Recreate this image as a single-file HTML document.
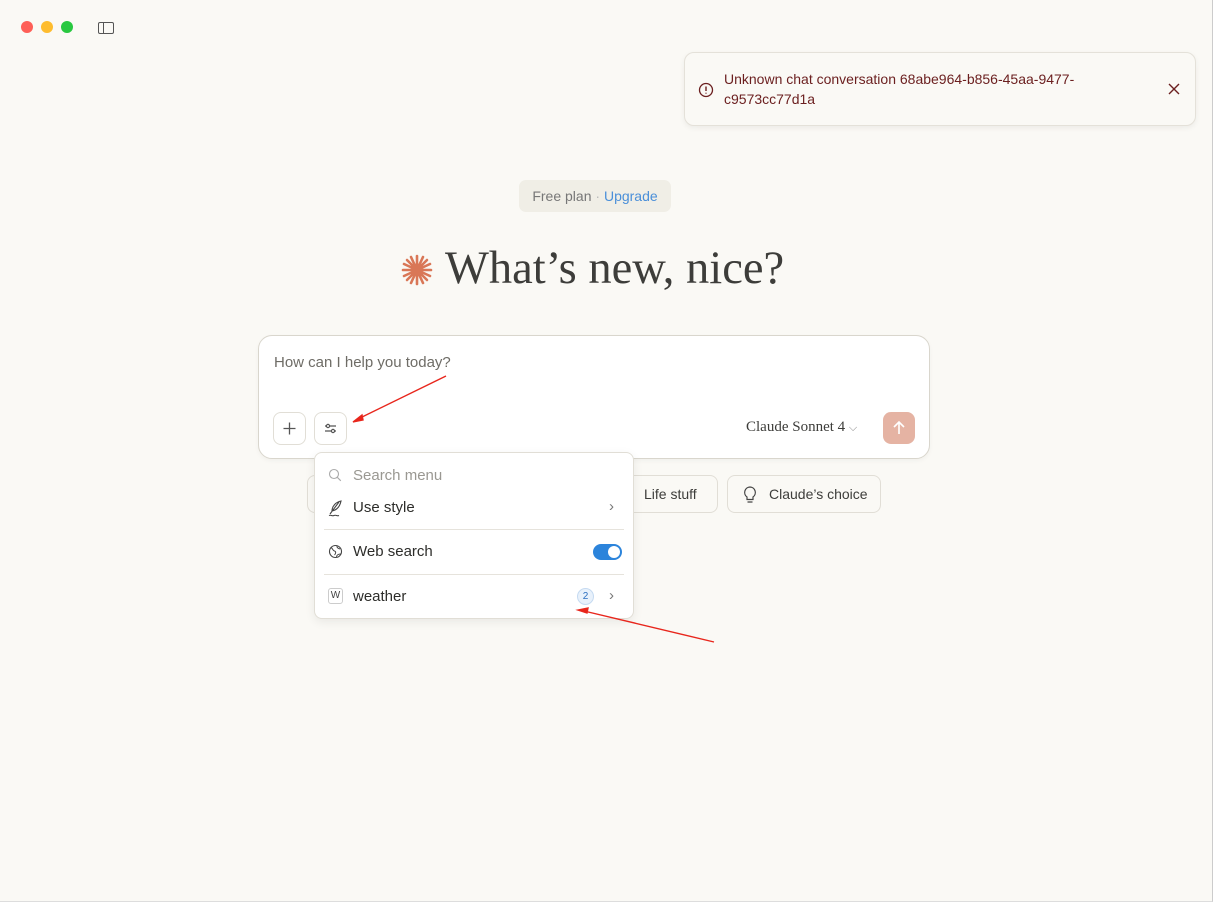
<!DOCTYPE html>
<html><head><meta charset="utf-8"><style>
*{box-sizing:border-box;margin:0;padding:0}
body{width:1213px;height:902px;background:#faf9f5;font-family:"Liberation Sans",sans-serif;position:relative;overflow:hidden;border-right:1px solid #ccc;border-bottom:1px solid #ddd}
.abs{position:absolute}
.dot{position:absolute;top:21px;width:12px;height:12px;border-radius:50%}
.toast{left:684px;top:52px;width:512px;height:74px;background:#faf9f5;border:1px solid #e4e1d9;border-radius:10px;box-shadow:0 2px 6px rgba(0,0,0,.06);color:#6b1f1f;font-size:14px;line-height:20px}
.plan{left:519px;top:180px;width:152px;height:32px;background:#f0eee6;border-radius:7px;font-size:14px;color:#777;line-height:32px;text-align:center}
.h{left:445px;top:242px;font-family:"Liberation Serif",serif;font-size:46.5px;color:#3d3d3a}
.box{left:258px;top:335px;width:672px;height:124px;background:#fff;border:1px solid #d9d6cd;border-radius:14px;box-shadow:0 2px 5px rgba(0,0,0,.04)}
.btn{position:absolute;width:33px;height:33px;border:1px solid #e1ded6;border-radius:8px;background:#fff}
.chip{position:absolute;top:475px;height:38px;border:1px solid #e1ded6;border-radius:8px;background:#faf9f5;font-size:14px;color:#3d3d3a;line-height:36px}
.menu{left:314px;top:452px;width:320px;height:167px;background:#fff;border:1px solid #e1ded6;border-radius:8px;box-shadow:0 3px 10px rgba(0,0,0,.07);font-size:15px;color:#2d2d2a}
.row{position:absolute;left:38px}
.sep{position:absolute;left:9px;right:9px;height:1px;background:#e6e3dc}
</style></head><body>
<div class="dot" style="left:21px;background:#fe5f57"></div>
<div class="dot" style="left:41px;background:#febc2e"></div>
<div class="dot" style="left:61px;background:#28c840"></div>
<div class="abs" style="left:98px;top:22px;width:16px;height:12px;border:1.3px solid #555;border-radius:2px"><div style="position:absolute;left:4px;top:0;bottom:0;width:1.3px;background:#555"></div></div>

<div class="abs toast">
<svg class="abs" style="left:13px;top:29px" width="16" height="16" viewBox="0 0 16 16"><circle cx="8" cy="8" r="6.5" fill="none" stroke="#6b1f1f" stroke-width="1.3"/><path d="M8 4.5v4.5M8 10.8v.8" stroke="#6b1f1f" stroke-width="1.4"/></svg>
<div class="abs" style="left:39px;top:16px">Unknown chat conversation 68abe964-b856-45aa-9477-<br>c9573cc77d1a</div>
<svg class="abs" style="left:482px;top:29px" width="14" height="14" viewBox="0 0 14 14"><path d="M2 2l10 10M12 2L2 12" stroke="#6b1f1f" stroke-width="1.4"/></svg>
</div>

<div class="abs plan">Free plan <span style="color:#bbb">·</span> <span style="color:#4a8fd9">Upgrade</span></div>

<svg class="abs" style="left:400px;top:253px" width="34" height="34" viewBox="0 0 34 34"><g stroke="#d97757" stroke-width="2.6" stroke-linecap="round"><path d="M17 3v28M3 17h28M7 7l20 20M27 7L7 27M11 4l12 26M23 4L11 30M4 11l26 12M30 11L4 23"/></g></svg>
<div class="abs h">What’s new, nice?</div>

<div class="abs box">
<div class="abs" style="left:15px;top:18px;font-size:15px;color:#6e6c66">How can I help you today?</div>
<div class="btn" style="left:14px;top:76px"><svg width="31" height="31" viewBox="0 0 31 31"><path d="M15.5 9.5v12M9.5 15.5h12" stroke="#555" stroke-width="1.3"/></svg></div>
<div class="btn" style="left:55px;top:76px"><svg width="31" height="31" viewBox="0 0 31 31"><g stroke="#555" stroke-width="1.2" fill="none"><path d="M10 13h11M10 18h11"/><circle cx="13" cy="13" r="1.6" fill="#fff"/><circle cx="18" cy="18" r="1.6" fill="#fff"/></g></svg></div>
<div class="abs" style="left:487px;top:83px;font-family:'Liberation Serif',serif;font-size:15px;color:#3d3d3a">Claude Sonnet 4 <span style="font-family:'Liberation Sans';font-size:11px;color:#888">⌵</span></div>
<div class="abs" style="left:624px;top:76px;width:32px;height:32px;background:#e5b3a3;border-radius:8px"><svg width="32" height="32" viewBox="0 0 32 32"><path d="M16 22V10M11 15l5-5 5 5" stroke="#fff" stroke-width="1.6" fill="none"/></svg></div>
</div>

<div class="chip" style="left:307px;width:20px"></div>
<div class="chip" style="left:610px;width:108px;padding-left:33px">Life stuff</div>
<div class="chip" style="left:727px;width:154px;padding-left:41px">Claude’s choice
<svg class="abs" style="left:13px;top:9px" width="18" height="20" viewBox="0 0 18 20"><path d="M9 2a5.5 5.5 0 0 0-3 10v2.5h6V12A5.5 5.5 0 0 0 9 2zM6.5 17h5" stroke="#444" stroke-width="1.2" fill="none"/></svg></div>

<div class="abs menu">
<svg class="abs" style="left:13px;top:15px" width="14" height="14" viewBox="0 0 14 14"><circle cx="6" cy="6" r="4.5" fill="none" stroke="#aaa" stroke-width="1.1"/><path d="M9.3 9.3l3.5 3.5" stroke="#aaa" stroke-width="1.1"/></svg>
<div class="row" style="top:14px;color:#9a9892;font-size:15px">Search menu</div>
<svg class="abs" style="left:12px;top:46px" width="16" height="18" viewBox="0 0 16 18"><path d="M3 15L12 3M5 12c0-5 4-9 9-10-1 5-4 9-9 10zM2 16.5c2-1 3 1 5 0s3 1 5 0" stroke="#444" stroke-width="1.1" fill="none"/></svg>
<div class="row" style="top:46px">Use style</div>
<div class="abs" style="left:294px;top:45px;color:#777">›</div>
<div class="sep" style="top:76px"></div>
<svg class="abs" style="left:13px;top:91px" width="15" height="15" viewBox="0 0 15 15"><circle cx="7.5" cy="7.5" r="6" fill="none" stroke="#444" stroke-width="1.1"/><path d="M3 3.5c2 1 1.5 3 3.5 3.5s1 3 0 4M9 2c-.5 2 1.5 2.5 3 3M8.5 13c0-2 2-3 4-3" stroke="#444" stroke-width="1" fill="none"/></svg>
<div class="row" style="top:90px">Web search</div>
<div class="abs" style="left:278px;top:91px;width:29px;height:16px;border-radius:8px;background:#2c84db"><div style="position:absolute;right:2px;top:2px;width:12px;height:12px;border-radius:50%;background:#fff"></div></div>
<div class="sep" style="top:121px"></div>
<div class="abs" style="left:13px;top:135px;width:15px;height:16px;border:1px solid #ccc;border-radius:3px;font-size:10px;text-align:center;line-height:14px;color:#444">W</div>
<div class="row" style="top:135px">weather</div>
<div class="abs" style="left:262px;top:135px;width:17px;height:17px;border-radius:50%;background:#e8f1fb;border:1px solid #c5daf1;font-size:10px;color:#2c6fc0;text-align:center;line-height:15px">2</div>
<div class="abs" style="left:294px;top:134px;color:#777">›</div>
</div>

<svg class="abs" style="left:0;top:0" width="1213" height="902"><g stroke="#e8261c" stroke-width="1.4" fill="#e8261c"><path d="M446 376L358 419"/><path d="M353 422l9-7 1 5z"/><path d="M714 642L584 611"/><path d="M578 610l10-2-1 5z"/></g></svg>
</body></html>
